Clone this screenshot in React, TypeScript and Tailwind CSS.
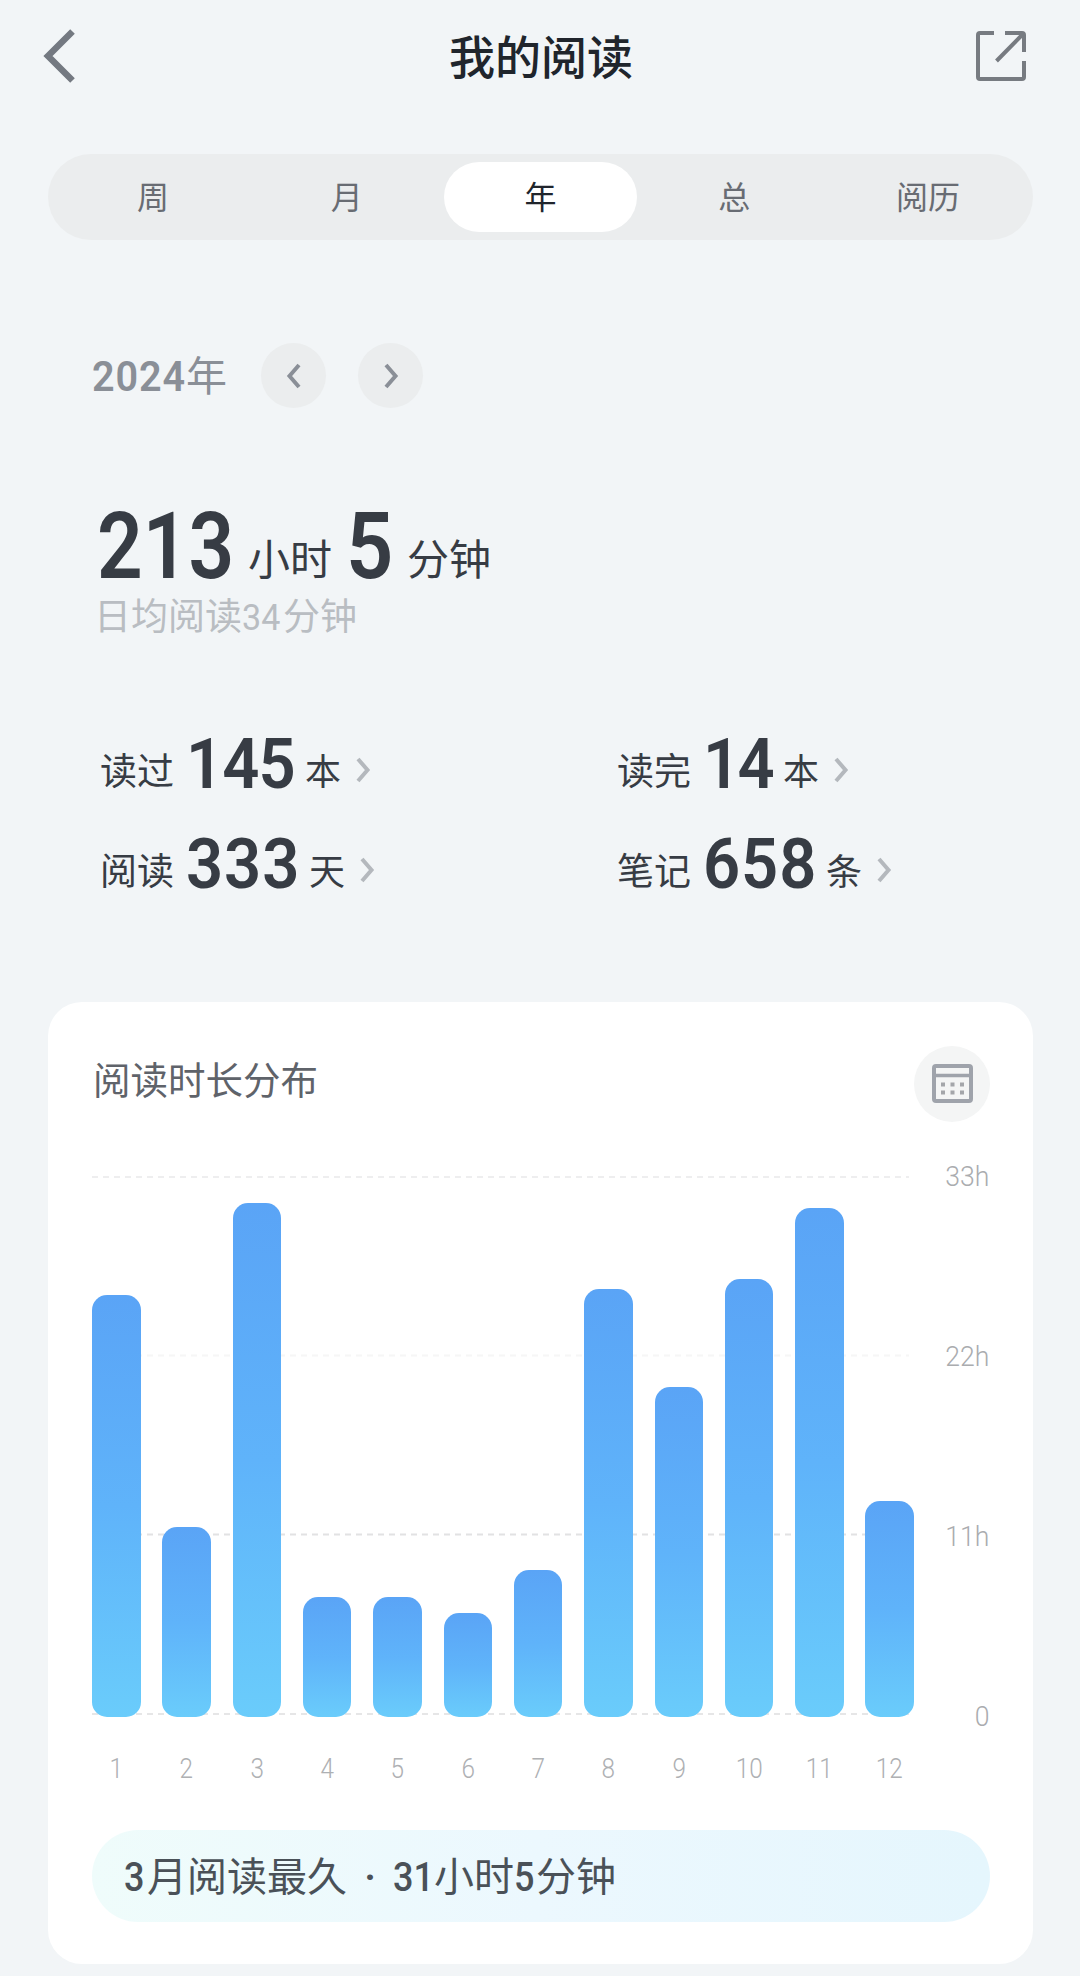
import { useState } from "react"
import type { ReactNode } from "react"
import clsx from "clsx"

const tabs = ["周", "月", "年", "总", "阅历"]

const stats = [
  { label: "读过", value: "145", unit: "本", width: "w-[118px]", tracking: "tracking-[-1px]" },
  { label: "读完", value: "14", unit: "本", width: "w-[79px]", tracking: "tracking-[-3px]" },
  { label: "阅读", value: "333", unit: "天", width: "w-[122px]", tracking: "tracking-[1px]" },
  { label: "笔记", value: "658", unit: "条", width: "w-[122px]", tracking: "tracking-[1px]" },
]

// bar heights in px, 33h is 540px tall
const months = [
  { month: 1, height: 422 },
  { month: 2, height: 190 },
  { month: 3, height: 514 },
  { month: 4, height: 120 },
  { month: 5, height: 120 },
  { month: 6, height: 104 },
  { month: 7, height: 147 },
  { month: 8, height: 428 },
  { month: 9, height: 330 },
  { month: 10, height: 438 },
  { month: 11, height: 509 },
  { month: 12, height: 216 },
]

const gridLines = [
  { y: 1, color: "#eeeeef" },
  { y: 179.5, color: "#f6f6f6" },
  { y: 358.5, color: "#e2e2e3" },
  { y: 538, color: "#e6e6e7" },
]

// narrow digits: the inner span is squeezed, the outer one sets the real width
function Num({ children, width, className }: { children: ReactNode; width: string; className?: string }) {
  return (
    <span className={clsx("inline-block whitespace-nowrap", width)}>
      <span className={clsx("inline-block origin-left", className)}>{children}</span>
    </span>
  )
}

function Chevron({ flip = false, className = "" }: { flip?: boolean; className?: string }) {
  return (
    <svg width="16" height="28" viewBox="0 0 16 28" fill="none" className={className}>
      <path d={flip ? "M13 3 3.500 14 13 25" : "M3 3l9.500 11L3 25"} stroke="currentColor" strokeWidth="4" />
    </svg>
  )
}

function Header() {
  return (
    <header className="flex h-[111px] items-center justify-between pl-[43px] pr-[54px]">
      <svg width="32" height="54" viewBox="0 0 32 54" fill="none" className="text-[#747981]">
        <path d="M29.500 2.500 5 27l24.500 24.500" stroke="currentColor" strokeWidth="6.500" />
      </svg>
      <h1 className="ml-[31px] pt-1 text-[46px] leading-none font-medium text-[#20252c]">我的阅读</h1>
      <svg width="50" height="50" viewBox="0 0 50 50" fill="none" className="text-[#777b81]">
        <path
          d="M18 2H4a2 2 0 0 0-2 2v42a2 2 0 0 0 2 2h42a2 2 0 0 0 2-2V30M29 2h17a2 2 0 0 1 2 2v17M47 3 20.500 30"
          stroke="currentColor"
          strokeWidth="4"
        />
      </svg>
    </header>
  )
}

function Tabs() {
  const [active, setActive] = useState("年")

  return (
    <nav className="mr-[47px] ml-12 mt-[43px] flex h-[86px] items-center rounded-full bg-[#ebedee] px-2">
      {tabs.map((tab) => (
        <button
          key={tab}
          onClick={() => setActive(tab)}
          className={clsx(
            "h-[70px] flex-1 rounded-full pt-px text-[32px] leading-none",
            active === tab ? "bg-white text-[#20252c]" : "text-[#686c73]",
          )}
        >
          {tab}
        </button>
      ))}
    </nav>
  )
}

function Summary() {
  return (
    <section>
      <div className="mt-[103px] flex h-[65px] items-center pl-[92px] text-[#8a8f97]">
        <span className="w-[169px] pt-px text-[41px] leading-none">
          <Num width="w-[94px]" className="scale-x-[0.920] text-[43px] font-semibold tracking-[1px]">
            2024
          </Num>
          年
        </span>
        <button className="flex size-[65px] items-center justify-center rounded-full bg-[#ebedee]">
          <Chevron flip />
        </button>
        <button className="ml-8 flex size-[65px] items-center justify-center rounded-full bg-[#ebedee]">
          <Chevron />
        </button>
      </div>

      <div className="mt-[93px] flex h-[92px] items-baseline pl-[97px] text-[#373c44]">
        <Num width="w-[134px]" className="scale-x-[0.870] text-[92px] leading-none font-semibold">
          213
        </Num>
        <span className="ml-[17px] -translate-y-[3px] text-[42px] leading-none">小时</span>
        <span className="ml-[14px]">
          <Num width="w-[45px]" className="scale-x-[0.900] text-[92px] leading-none font-semibold">
            5
          </Num>
        </span>
        <span className="ml-4 -translate-y-[3px] text-[42px] leading-none">分钟</span>
      </div>
      <p className="mt-[3px] pl-[94px] text-[37px] leading-[44px] text-[#b9bdc2]">
        日均阅读
        <Num width="w-[41px]" className="scale-x-[0.920]">
          34
        </Num>
        分钟
      </p>

      <div className="mt-[82px] grid grid-cols-[517px_1fr] pl-[100px] text-[#373c44]">
        {stats.map((stat) => (
          <a key={stat.label} href="#" className="flex h-[100px] items-baseline">
            <span className="-translate-y-[3px] text-[37px] leading-none">{stat.label}</span>
            <span className="ml-3">
              <Num
                width={stat.width}
                className={clsx("scale-x-[0.930] text-[70px] leading-[84px] font-semibold", stat.tracking)}
              >
                {stat.value}
              </Num>
            </span>
            <span className="ml-px -translate-y-[3px] text-[36px] leading-none">{stat.unit}</span>
            <Chevron className="ml-3.5 -translate-y-1 text-[#b4b8bd]" />
          </a>
        ))}
      </div>
    </section>
  )
}

function CalendarIcon() {
  return (
    <svg width="41" height="39" viewBox="0 0 41 39" fill="none">
      <rect x="2" y="2" width="37" height="35" rx="2" stroke="#9fa3ab" strokeWidth="4" />
      <path d="M2 11.500h37" stroke="#9fa3ab" strokeWidth="3.500" />
      <path d="M9 20.500h23M9 28.500h23" stroke="#a4a6aa" strokeWidth="4" strokeDasharray="4 5.500" />
    </svg>
  )
}

function Chart() {
  return (
    <div className="mt-[54px] flex justify-between pr-px">
      <div className="w-[822px]">
        {/* grid lines and bars share one cell */}
        <div className="grid h-[541px]">
          <svg width="817" height="541" className="col-start-1 row-start-1">
            {gridLines.map((line) => (
              <line key={line.y} x1="0" x2="817" y1={line.y} y2={line.y} stroke={line.color} strokeWidth="2" strokeDasharray="6 5" />
            ))}
          </svg>
          <div className="col-start-1 row-start-1 flex items-end justify-between">
            {months.map((item) => (
              <div
                key={item.month}
                className="w-[48.5px] rounded-[15px] bg-linear-to-b from-[#5aa4f6] via-[#5fb3fa] to-[#6accfb]"
                style={{ height: item.height }}
              />
            ))}
          </div>
        </div>
        <div className="mt-[38px] flex justify-between text-[27px] leading-7 font-light text-[#aeb0b3]">
          {months.map((item) => (
            <span key={item.month} className="w-[48.5px] scale-x-[0.900] text-center">
              {item.month}
            </span>
          ))}
        </div>
      </div>
      <div className="-mt-[13px] flex h-[568px] origin-right scale-x-[0.950] flex-col justify-between text-right text-[28px] leading-7 font-light text-[#aaacaf]">
        <span>33h</span>
        <span>22h</span>
        <span>11h</span>
        <span>0</span>
      </div>
    </div>
  )
}

export default function App() {
  return (
    <div className="h-[1976px] w-[1080px] overflow-hidden bg-[#f2f5f7] [font-family:Roboto,'Noto_Sans_CJK_SC',sans-serif]">
      <Header />
      <Tabs />
      <Summary />

      <section className="mr-[47px] ml-12 mt-[80px] h-[962px] rounded-[34px] bg-white pt-[43px] pr-[43px] pl-11">
        <div className="flex h-[77px] items-center justify-between">
          <h2 className="pb-1 pl-px text-[37.500px] leading-none text-[#5f636a]">阅读时长分布</h2>
          <div className="flex size-[76px] items-center justify-center rounded-full bg-[#f4f5f5]">
            <CalendarIcon />
          </div>
        </div>
        <Chart />
        <div className="mt-[47px] flex h-[92px] items-center rounded-full bg-linear-to-r from-[#effcfb] via-[#ecf8fe] to-[#e5f6fd] pt-1 pl-8 text-[40px] leading-none text-[#4a5158]">
          <Num width="w-[23px]" className="scale-x-[0.900] font-medium">
            3
          </Num>
          <span>月阅读最久</span>
          <span className="w-[46px] text-center font-semibold">·</span>
          <Num width="w-[41px]" className="scale-x-[0.900] font-medium">
            31
          </Num>
          <span>小时</span>
          <Num width="w-[22px]" className="scale-x-[0.900] font-medium">
            5
          </Num>
          <span>分钟</span>
        </div>
      </section>
    </div>
  )
}
